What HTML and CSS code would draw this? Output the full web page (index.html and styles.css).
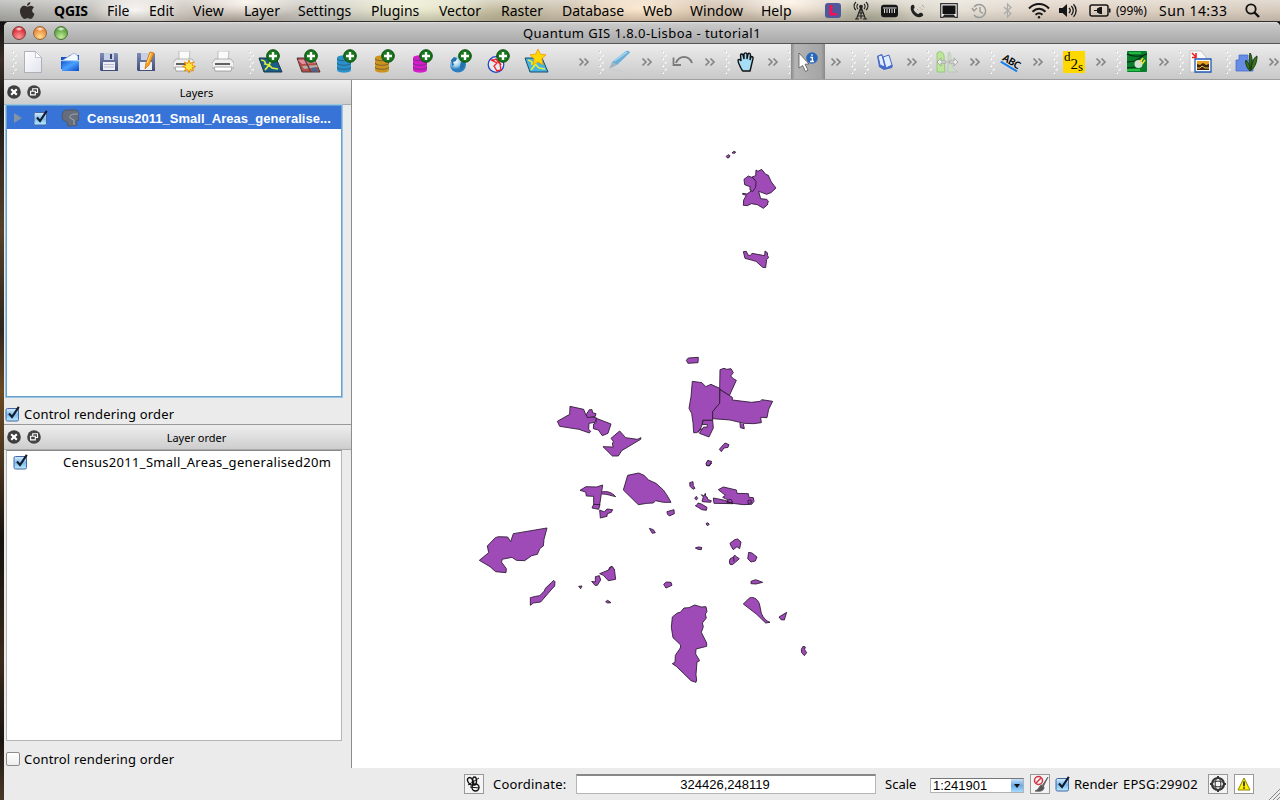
FILE: index.html
```html
<!DOCTYPE html>
<html lang="en">
<head>
<meta charset="utf-8">
<title>Quantum GIS 1.8.0-Lisboa - tutorial1</title>
<link rel="stylesheet" href="styles.css">
</head>
<body>
<svg class="defs" width="0" height="0" aria-hidden="true">
  <defs>
    <linearGradient id="blue" x1="0" y1="0" x2="0" y2="1"><stop offset="0" stop-color="#d8eefc"/><stop offset=".5" stop-color="#7db9ee"/><stop offset="1" stop-color="#b9ecff"/></linearGradient>
    <linearGradient id="folder" x1="0" y1="0" x2="1" y2="1"><stop offset="0" stop-color="#0b4fc4"/><stop offset=".5" stop-color="#4ba0ff"/><stop offset="1" stop-color="#0a48c8"/></linearGradient>
    <linearGradient id="paper" x1="0" y1="0" x2="1" y2="1"><stop offset="0" stop-color="#fff"/><stop offset="1" stop-color="#e2e4ee"/></linearGradient>
    <linearGradient id="disk" x1="0" y1="0" x2="0" y2="1"><stop offset="0" stop-color="#7d8db8"/><stop offset="1" stop-color="#3f4d78"/></linearGradient>
    <radialGradient id="globe" cx=".35" cy=".3"><stop offset="0" stop-color="#fff"/><stop offset=".6" stop-color="#9fd0ee"/><stop offset="1" stop-color="#2b7fc0"/></radialGradient>
  </defs>
  <symbol id="grip" viewBox="0 0 6 24"><g fill="#fff"><circle cx="2" cy="2" r="1.2"/><circle cx="4.500" cy="5.500" r="1.2"/><circle cx="2" cy="9" r="1.2"/><circle cx="4.500" cy="12.500" r="1.2"/><circle cx="2" cy="16" r="1.2"/><circle cx="4.500" cy="19.500" r="1.2"/><circle cx="2" cy="23" r="1"/></g><g fill="#bcbcbc"><circle cx="1.500" cy="1.500" r=".7"/><circle cx="4" cy="5" r=".7"/><circle cx="1.500" cy="8.500" r=".7"/><circle cx="4" cy="12" r=".7"/><circle cx="1.500" cy="15.500" r=".7"/><circle cx="4" cy="19" r=".7"/><circle cx="1.500" cy="22.500" r=".7"/></g></symbol>
  <symbol id="more" viewBox="0 0 12 10"><path d="M1.500 1.500 5 5 1.500 8.500M6.500 1.500 10 5 6.500 8.500" fill="none" stroke="#858585" stroke-width="1.700"/></symbol>
  <symbol id="plus" viewBox="0 0 14 14"><circle cx="7" cy="7" r="6.300" fill="#16761b" stroke="#0c4c10"/><path d="M7 3v8M3 7h8" stroke="#fff" stroke-width="2.400"/></symbol>
  <symbol id="db" viewBox="0 0 14 18"><path d="M0 3v12c0 3.500 14 3.500 14 0V3z"/><ellipse cx="7" cy="3" rx="7" ry="2.700"/><path d="M0 3.500c0 3 14 3 14 0M0 8c0 3 14 3 14 0M0 12c0 3 14 3 14 0" fill="none" stroke="#2b3b4a" stroke-opacity=".6" stroke-width=".9"/></symbol>
  <symbol id="check" viewBox="0 0 16 16"><rect x="1" y="2.500" width="12.500" height="12.500" rx="1.500" fill="url(#blue)" stroke="#4567a4"/><path d="M4 7.500 7 11 13.800.8" fill="none" stroke="#111c2b" stroke-width="2.100"/></symbol>
  <symbol id="close" viewBox="0 0 14 14"><circle cx="7" cy="7" r="6.800" fill="#3e3e3e"/><path d="m4.200 4.200 5.600 5.600m0-5.600L4.200 9.800" stroke="#fff" stroke-width="2.200"/></symbol>
  <symbol id="float" viewBox="0 0 14 14"><circle cx="7" cy="7" r="6.800" fill="#444"/><path d="M5.700 6V3.700h4.800v3.800H8.700M3.600 6.200h4.700v3.700H3.600z" fill="none" stroke="#fff" stroke-width="1.100"/></symbol>
  <symbol id="printer" viewBox="0 0 22 21"><path d="m6 0h11l-1 9H6z" fill="#fafafa" stroke="#aaa" stroke-width=".7"/><path d="M3 8h16l3 4v5H0v-5z" fill="#efefef" stroke="#999" stroke-width=".7"/><path d="M3 13h15" stroke="#333" stroke-width="1.600"/><path d="M2 16h18l-1 4H3z" fill="#fff" stroke="#888" stroke-width=".7"/></symbol>
  <symbol id="star" viewBox="0 0 20 20"><path d="m10 0 3 6.500 7 .8-5.200 5 1.500 7.700L10 16l-6.300 4 1.500-7.700L0 7.300l7-.8z" fill="#ffd800" stroke="#f19b00"/></symbol>
</svg>

<header class="menubar">
  <nav class="menus">
    <span><svg class="apple" viewBox="0 0 16 18"><path d="M11 0c.2 2-1.500 4-3.500 4C7.300 2 9 .3 11 0zM8 5c1-.1 2-1 3.600-1 1.300 0 2.600.8 3.300 1.900-2.800 1.700-2.400 5.500.6 6.600C14.600 15 13.200 18 11.300 18c-1.300 0-1.700-.7-3.200-.7S6.200 18 5 18C3 18 0 13.600 0 9.800 0 6 2.300 4 4.600 4 6 4 7.200 5 8 5z" fill="#332e2b"/></svg></span>
    <b>QGIS</b><span>File</span><span>Edit</span><span>View</span><span>Layer</span><span>Settings</span><span>Plugins</span><span>Vector</span><span>Raster</span><span>Database</span><span>Web</span><span>Window</span><span>Help</span>
  </nav>
  <div class="extras">
    <i><svg width="16" height="15"><rect width="16" height="15" rx="3" fill="#4f589b"/><path d="M4.500 2h3v8H12v2.500H4.500z" fill="#f50f54"/></svg></i>
    <i><svg width="16" height="18" fill="none" stroke="#222" stroke-width="1.100"><path d="M7.900 5 3.500 17M8.100 5l4.400 12M5 11h6M4 14h8M2 17h4m4 0h4M5 2c-1.500 1.500-1.500 3.500 0 5M3 0C.4 2.500.4 6 3 8M11 2c1.500 1.500 1.500 3.500 0 5M13 0c2.600 2.500 2.600 6 0 8M8 5v12"/><circle cx="8" cy="4.500" r="1.300" fill="#222"/></svg></i>
    <i><svg width="19" height="14"><rect x="1" y=".8" width="17" height="12.500" rx="3" fill="#161616"/><path d="M4.500 5v4M7 5v4M9.500 5v4M12 5v4M14.500 5v4M3 4h13.500" stroke="#ddd" stroke-width="1" fill="none"/></svg></i>
    <i><svg width="15" height="16"><path d="M1 3c2-2.500 4-.5 3.500 2L3.500 6c.8 2.800 2.700 4.500 5 5l1.500-1.300c2.200-.3 4.300 1.800 2.600 3.300C7 17.500-1 9 1 3z" fill="#222"/><path d="M7.500 6.500 9 8M10 4.500l2 2M12 2l3 3" stroke="#888" stroke-dasharray="1 1"/></svg></i>
    <i><svg width="18" height="15"><path d="M.7.700h16.600v13.600h-2.300L13.500 12h-9L3 14.300H.7z" fill="#eee" stroke="#333" stroke-width="1.200"/><path d="M2.500 2.500h13v8.500h-13z" fill="#111"/><path d="M4.500 12h9l1.500 2.500H3z" fill="#222"/></svg></i>
    <i><svg width="17" height="16" fill="none" stroke="#999" stroke-width="1.400"><path d="M3 4a6.500 6.500 0 1 1 0 8M1 5l2 3 3-3M9 4v4.500l3 2"/></svg></i>
    <i><svg width="10" height="15" fill="none" stroke="#aaa" stroke-width="1.200"><path d="m1 4 7 6.500L4.500 14V1L8 4.500 1 11"/></svg></i>
    <i><svg width="22" height="17" fill="none" stroke="#161616" stroke-width="2"><path d="M1 6.500c5.500-6 14.500-6 20 0M4.500 9.700c4-4 9-4 13 0M7.500 12.800c2.200-2 4.800-2 7 0"/><circle cx="11" cy="15.200" r="1.200" fill="#161616" stroke="none"/></svg></i>
    <i><svg width="18" height="15"><path d="M0 5h3.500L8 1v13l-4.500-4H0z" fill="#161616"/><path d="M10 5c1.500 1.500 1.500 3.500 0 5M12.300 3c2.600 2.500 2.600 6.500 0 9M14.500 1.200c3.500 3.500 3.500 9.100 0 12.600" fill="none" stroke="#161616" stroke-width="1.300"/></svg></i>
    <i><svg width="22" height="13"><rect x="1" y="1" width="18" height="11" rx="2" fill="none" stroke="#161616" stroke-width="1.500"/><path d="M20 4.500h1.500v4H20zM5 6h3V4.500L11 3h2v7h-2L8 8.500V7H5z" fill="#161616"/></svg></i>
    <span class="pct">(99%)</span>
    <span class="clock">Sun 14:33</span>
    <i><svg width="15" height="15" fill="none" stroke="#111"><circle cx="6" cy="6" r="4.700" stroke-width="1.800"/><path d="m9.500 9.500 4.500 4.500" stroke-width="2.400"/></svg></i>
  </div>
</header>

<div class="window">
  <div class="titlebar"><div class="lights"><i class="red"></i><i class="amber"></i><i class="green"></i></div><h1>Quantum GIS 1.8.0-Lisboa - tutorial1</h1></div>

  <div class="toolbar">
    <div class="group file">
      <svg class="grip"><use href="#grip"/></svg>
      <span class="btn"><svg width="20" height="24"><path d="M1.500 1.500h11l6 6v15h-17z" fill="url(#paper)" stroke="#a9a9b5" stroke-width=".9"/><path d="M12.500 1.500v6h6z" fill="#fff" stroke="#b7b7c4" stroke-width=".8"/></svg></span>
      <span class="btn"><svg width="22" height="22"><path d="M1 6h7l2-2h9v14H1z" fill="#1654bd"/><path d="m3 9 11-7 4 3v5H3z" fill="#f4f8ff" stroke="#7b9ad0" stroke-width=".7"/><path d="M1 9h18v11H2z" fill="url(#folder)"/><path d="M1 9.700h18" stroke="#bfe0ff"/></svg></span>
      <span class="btn"><svg width="20" height="22"><path d="M1 2h17l1 1v17H2l-1-1z" fill="url(#disk)"/><path d="M5 2h10v7H5z" fill="#c9d0e4"/><path d="M11 3h2v5h-2z" fill="#36446e"/><path d="M4 11h12v8H4z" fill="#eef0f5"/><path d="M5 13.500h10M5 16h10" stroke="#b9bdca"/></svg></span>
      <span class="btn"><svg width="22" height="22"><path d="M1 2h17l1 1v17H2l-1-1z" fill="url(#disk)"/><path d="M5 2h10v7H5z" fill="#c9d0e4"/><path d="M4 11h12v8H4z" fill="#eef0f5"/><path d="m14 1 4 1-5 12-4 4 1-6z" fill="#f6a520" stroke="#d5700d" stroke-width=".8"/><path d="m15 2-4 10" stroke="#ffe394"/></svg></span>
      <span class="btn"><svg width="24" height="24"><use href="#printer" x="0" y="1" width="22" height="21"/><path d="m16 10 1.300 3.500 3.200-1.500-1.500 3.200 3.500 1.300-3.500 1.300 1.500 3.200-3.200-1.500L16 23l-1.300-3.500-3.200 1.500 1.500-3.200-3.500-1.300 3.500-1.300-1.500-3.200 3.200 1.500z" fill="#ffe83b" stroke="#ef8b00"/></svg></span>
      <span class="btn"><svg width="22" height="21"><use href="#printer"/></svg></span>
    </div>
    <div class="group layers">
      <svg class="grip"><use href="#grip"/></svg>
      <span class="btn"><svg width="25" height="25"><path d="M1 9h17l6 14H6z" fill="#1b5f89" stroke="#153646"/><path d="M3 11c3 0 5 2 4 4l4 1 3 3 6 1M7 21l4-5 2-4 4-3" stroke="#dbea3c" stroke-width="1.700" fill="none"/><use href="#plus" x="8" y="0" width="14" height="14"/></svg></span>
      <span class="btn"><svg width="25" height="25"><path d="M1 9h17l6 14H6z" fill="#b64e48" stroke="#553738"/><path d="m2 11 16-1 2 4-14 1z" fill="#e890a0"/><path d="m6 17 15-1 1 2-14 2z" fill="#b8aba5"/><path d="m8 9 7 14" stroke="#5a4148" stroke-width="1.500"/><path d="m15 19 5-.5 2 4h-5z" fill="#3b6b9c"/><use href="#plus" x="8" y="0" width="14" height="14"/></svg></span>
      <span class="btn db1"><svg width="23" height="25"><use href="#db" x="2" y="6" width="14" height="18"/><use href="#plus" x="8" y="0" width="14" height="14"/></svg></span>
      <span class="btn db2"><svg width="23" height="25"><use href="#db" x="2" y="6" width="14" height="18"/><use href="#plus" x="8" y="0" width="14" height="14"/></svg></span>
      <span class="btn db3"><svg width="23" height="25"><use href="#db" x="2" y="6" width="14" height="18"/><use href="#plus" x="8" y="0" width="14" height="14"/></svg></span>
      <span class="btn"><svg width="23" height="25"><circle cx="9" cy="15.500" r="8" fill="url(#globe)"/><path d="m2 11 3-3 3 1-1 3-3 1 1 3-2 1zM12 13l4 1-1 4-3 3-1-4z" fill="#256faa"/><use href="#plus" x="9" y="0" width="14" height="14"/></svg></span>
      <span class="btn"><svg width="23" height="25"><circle cx="9" cy="15.500" r="7.800" fill="#e8eaf2" stroke="#2346c4" stroke-width="1.300"/><path d="m4 11 6 3-3 3 3 5 4-1-1-6-4-5-2 1zM11 11l3 5" fill="none" stroke="#f51b24" stroke-width="1.300"/><use href="#plus" x="9" y="0" width="14" height="14"/></svg></span>
      <span class="btn"><svg width="25" height="25"><path d="M1 9h17l6 14H6z" fill="#45b4e2" stroke="#174d69"/><path d="M4 11c3 1 5 2 4 4l4 1 3 3 6 1M7 21l4-5 2-5" stroke="#e4ed37" stroke-width="1.700" fill="none"/><use href="#star" x="6" y="0" width="16" height="16"/></svg></span>
    </div>
    <svg class="more lone"><use href="#more"/></svg>
    <div class="group single">
      <svg class="grip"><use href="#grip"/></svg>
      <span class="btn"><svg width="24" height="24"><path d="M3 20c5-1 12 1 15 3" stroke="#ccc" stroke-width="1.500" fill="none"/><path d="m4 12 14-11q3-1 4 1.500L9 15z" fill="#6aaed7"/><path d="m6 11 13-9" stroke="#a0d1ed" stroke-width="2"/><path d="m4 12 5 3-6 3-2 1z" fill="#9fb4c4"/></svg></span>
      <svg class="more"><use href="#more"/></svg>
    </div>
    <div class="group single">
      <svg class="grip"><use href="#grip"/></svg>
      <span class="btn"><svg width="22" height="14"><path d="M4 8C7 0 17 0 20 8" fill="none" stroke="#7c7c7c" stroke-width="2"/><path d="M1.500 2.500v7.500h7.500" fill="none" stroke="#7c7c7c" stroke-width="1.800"/></svg></span>
      <svg class="more"><use href="#more"/></svg>
    </div>
    <div class="group single">
      <svg class="grip"><use href="#grip"/></svg>
      <span class="btn"><svg width="18" height="20"><path d="M5 18C3 14 1 12 1 8c1-1 2-1 3 1L3.500 3C4 1.500 5.800 2 6 3L7 7V2c.5-1.500 2.500-1.500 3 0v5l1-5c1-1.300 2.500-.5 2.500 1L13 8l1-3c1-1 2.500 0 2 1.500L14 15l-1 4H6z" fill="#a7def7" stroke="#111" stroke-width="1.400"/></svg></span>
      <svg class="more"><use href="#more"/></svg>
    </div>
    <div class="group single">
      <svg class="grip"><use href="#grip"/></svg>
      <span class="btn active"><svg width="22" height="22"><circle cx="15" cy="7" r="5.800" fill="#2766bd"/><path d="M15 3.300v1.500M13.300 6.400h2v4.200M13 10.500h4" stroke="#fff" stroke-width="1.500"/><path d="m2 2 10 11-4 .2 3 6-2.500 1.300-2.800-6L2 17z" fill="#fff" stroke="#555" stroke-width=".8"/></svg></span>
      <svg class="more"><use href="#more"/></svg>
    </div>
    <div class="spare"><svg class="grip"><use href="#grip"/></svg></div>
    <div class="group single">
      <svg class="grip"><use href="#grip"/></svg>
      <span class="btn"><svg width="18" height="18"><path d="m1 3 5-2 4 12 7-1-1 3-8 2-5-3z" fill="#4667c5"/><path d="m2 3 4-1 3 12-5-2zM7 4l6-2 3 10-6 3z" fill="#e0edff" stroke="#4869c9"/></svg></span>
      <svg class="more"><use href="#more"/></svg>
    </div>
    <div class="group single">
      <svg class="grip"><use href="#grip"/></svg>
      <span class="btn"><svg width="26" height="24"><path d="M2 22V3c5-4 8 1 7 7l1 12z" fill="#bde59b" stroke="#9cc77e"/><path d="M13 22V3c2-3 3 1 3 6 1 8 2 10 7 13z" fill="#c9dfc2" stroke="#bbb" stroke-width=".6"/><path d="m6 8-4 4 4 4v-3h5v-2H6zM19 8l4 4-4 4v-3h-5v-2h5z" fill="#ededed" stroke="#999" stroke-width=".8"/></svg></span>
      <svg class="more"><use href="#more"/></svg>
    </div>
    <div class="group single">
      <svg class="grip"><use href="#grip"/></svg>
      <span class="btn"><span class="abc">ABC</span></span>
      <svg class="more"><use href="#more"/></svg>
    </div>
    <div class="group single">
      <svg class="grip"><use href="#grip"/></svg>
      <span class="btn"><span class="d2s"><span>d</span><span class="two">2</span><span class="ess">s</span></span></span>
      <svg class="more"><use href="#more"/></svg>
    </div>
    <div class="group single">
      <svg class="grip"><use href="#grip"/></svg>
      <span class="btn"><svg width="20" height="21"><rect width="20" height="21" rx="1" fill="#087d2b"/><path d="M0 3c5 3 15 3 20 0M0 11l8-1 8-5M0 17l9-1" fill="none" stroke="#032e11" stroke-width="1.200"/><path d="M2 1h12v2H2z" fill="#20b748"/><circle cx="11.500" cy="13" r="4" fill="#d5dfd3"/><path d="m13 11 3-4M15 13l3-4" stroke="#f5db38" stroke-width="1.600"/><path d="M0 19h13" stroke="#26be45" stroke-width="2"/></svg></span>
      <svg class="more"><use href="#more"/></svg>
    </div>
    <div class="group image">
      <svg class="grip"><use href="#grip"/></svg>
      <span class="btn"><svg width="23" height="24"><path d="M1 1h11l5 6v15H1z" fill="#fafafa" stroke="#bbb" stroke-width=".8"/><path d="m3 3 4 4M7 3v4.500H3" fill="none" stroke="#ee2020" stroke-width="1.600"/><path d="M6 9h16v13H6z" fill="#fff" stroke="#2259b3" stroke-width="1.300"/><path d="M8 11h12v9H8z" fill="#e8a020"/><path d="m8 14 3 1 3-2 3 2 3-1v6H8z" fill="#3a220b"/><path d="M8 18h3l2-2 3 2h4" stroke="#f3c142" fill="none"/></svg></span>
    </div>
    <div class="group single">
      <svg class="grip"><use href="#grip"/></svg>
      <span class="btn"><svg width="24" height="22"><path d="M1 9h3V4h9v5h5v11H1z" fill="#668ce6" stroke="#4670d0" stroke-width=".8"/><path d="M15 20c-4-4-5-9-4-11 2 2 4 5 4 9 0-6-1-13 0-16 3 4 2 12 1 17 0-6 3-13 6-14 0 6-2 12-7 15z" fill="#3d731b" stroke="#173b0b"/></svg></span>
      <svg class="more"><use href="#more"/></svg>
    </div>
  </div>

  <main class="work">
    <aside class="docks">
      <section class="dock first">
        <div class="dock-head"><svg><use href="#close"/></svg><svg><use href="#float"/></svg><h2>Layers</h2></div>
        <div class="list focused">
          <div class="row selected"><svg class="arrow" viewBox="0 0 8 10"><path d="m0 0 8 5-8 5z" fill="#8393a6"/></svg><svg class="check"><use href="#check"/></svg><svg class="poly" viewBox="0 0 19 18"><path d="M2 3q2-3 6-2h8l2 3-1 4 1 3-3 1 1 4-5 1H7l-1-4-4-2-1-4z" fill="#666e7c" stroke="#4f596b"/><path d="M9 9c-1-4 4-4 8-4M9 9l4 2v5" fill="none" stroke="#a0a8b4"/></svg><strong>Census2011_Small_Areas_generalise...</strong></div>
        </div>
        <label class="control"><svg class="check"><use href="#check"/></svg><span>Control rendering order</span></label>
      </section>
      <section class="dock second">
        <div class="dock-head"><svg><use href="#close"/></svg><svg><use href="#float"/></svg><h2>Layer order</h2></div>
        <div class="list">
          <div class="row"><svg class="check"><use href="#check"/></svg><span class="lname">Census2011_Small_Areas_generalised20m</span></div>
        </div>
        <label class="control"><i class="box"></i><span>Control rendering order</span></label>
      </section>
    </aside>
    <svg class="map" viewBox="352 80 928 688" fill="#9f4bb7" stroke="#2c1733" stroke-width="2.600" stroke-linejoin="round">
      <g transform="translate(670 140) scale(.33333)">
        <path d="m169 49 5-5 6 3-3 6-5 1zM186 39l5-5 6 2-3 4z"/>
        <path d="m258 90 6 4 11-6 12 15 8 3 9 20 14 18-15 14-13 5-24-9 6 22 18 2 5 5-3 12-12 10-18-11-18-3-12 6-12-1 1-16 8-14-11-3v-3l13 2 15-11 10-14-2-18-8-8 11-4z"/>
        <path d="m222 118 13-10 15 6 8 11-1 17-9 13-8-5v-10l-16-6z"/>
        <path d="m220 335 9-1 5 11 7 2 5-7 38 7 1-14 7 5 1 9 3 6-6 5-3 25-9-1-20-18-33-9z"/>
      </g>
      <g transform="translate(540 350) scale(.33333)">
        <path d="m439 31 6-7 30-2-1 16-30 2z"/>
        <path d="m540 59 12-4 8 3 13-2 7 12-8 10 8 8 9 5-21 46-29-20z"/>
        <path d="M457 94 486 98 497 110 513 103 539 115 539 160 518 185V211H488L486 225 480 240 470 248H461L459 218 455 190 447 175 453 140Z"/>
        <path d="M540 119 577 142V150L634 157 661 154 665 149 698 154 686 178 681 203 662 202 664 218 640 221 612 220 570 210 518 206V185L539 160Z"/>
        <path d="M518 211h-29l-2 13 15-1-1 9-10-1-13 19 29 11 13-27zM474 248l5-10 8-1M600 219l1 14 12 3-3-15"/>
        <path d="m550 284 5-5 12 5-3 8-12 2-8 11-6-7zM499 343l5-12 11 8-7 9-8-1z"/>
        <path d="m90 169 41 9 7 18 32 8-5 13-18 3-1 18 6 6-4 5-31-11-58-9-7-15 37-21z"/>
        <path d="m139 193 9-14h8l2 9 10 3-2 8-24 4zM169 205l44 17-9 28-17 7-12-17-15-4 1-14 7-4z"/>
        <path d="M239 243 257 263 292 268 303 263 302 268 245 302 235 318H217L189 290 220 291 217 282 220 274 213 265Z"/>
      </g>
      <g transform="translate(570 460) scale(.33333)">
        <path d="m30 91 18-11 32 1 18-6-9 60-18-1V109l-22-1-2-12z"/>
        <path d="M95 96c15-4 31 1 42 14-15-3-24-8-42-8M71 133l19 1-4 14-20-4zM89 150l14 6 8-9 17 2-4 8-12 4-1 8-20 5z"/>
        <path d="M160 90 173 46 206 39 222 46 236 60 258 70 280 90 290 104 303 127 280 127 257 122 250 129 231 130 205 134Z"/>
        <path d="m291 155 21-6 1 12-15 7-6-6zM238 205l12 4 6 9-9 2zM408 10l5-8 12 2-6 12-8 1zM359 68l10-3 1 12 5 8-6 3-9-9zM374 115l5-6 4 6-4 5zM396 123l4-12-6-7 8 4 4-8 1 9 4 2 3 8 10 3-2 5-25-2zM376 137l6-3 2-5 10 3 17 10-2 9-14-2-9-6z"/>
        <path d="M445 89 460 81 499 90 501 100 535 101 537 112 550 113 552 124 545 133 520 134 488 130 470 118 458 112 466 106Z"/>
        <path d="m430 114 16 3 18 4 25 10-57-1zM471 128v-7l12-3 5 9zM534 130v-9l9-1 1 9zM408 191l5-3 5 5-6 4zM376 264l8-3 11 1-1 7-10-1z"/>
        <path d="m480 250 14-11 9-2 10 9-4 20-8-6-11 9-6-9zM478 306l2-9 11-7 3-5 5 5 9 6-12 11-9 7-7-1zM491 291l1 14M536 277l10 2 15 12-5 12-13 3-10-10zM116 329l3-7 7-3 6 9z"/>
      </g>
      <g transform="translate(470 510) scale(.33333)">
        <path d="m28 151 28-23-4-20 24-25 9-3 28 1 9 14 8-24 101-17-9 34-2 20-10 7-8 18-17 4-21 15-25-1-13-9-30 6-1 9 14 19-1 12-31-3-17-15z"/>
        <path d="M181 286 181 263 197 259 209 257 223 243 226 235 245 217 251 211 255 215 254 228 243 240 212 276 190 279ZM326 229l10-1-4 8zM365 214 376 216 376 200 388 197 392 210 382 226 375 226ZM389 191 416 180 425 169 433 177 437 208 415 212 400 196ZM407 275l6-4 10 7-10 1z"/>
      </g>
      <g transform="translate(650 560) scale(.33333)">
        <path d="m41 73 8-7 14 1 3 9-18 8zM303 71v-7l14-5 21 8-20 5z"/>
        <path d="M280 132 296 116C305 107 325 115 329 135L334 160C340 175 350 184 360 187L347 189 320 163ZM387 171l23-14-7 23-10-1zM454 268l5-9 7 2-2 8 6 9-7 9-8-9z"/>
        <path d="M67 171 82 159 91 157 102 144 117 143 134 135 154 141 168 140 171 155 166 162 169 174 157 189 160 200 154 217 170 249V259L138 267 137 282 149 302 141 306 138 344 140 360 138 367 123 362 80 320 67 311 75 307 76 286 91 264 92 255 69 233 64 202Z"/>
      </g>
    </svg>
  </main>

  <footer class="status">
    <span class="tool"><svg width="18" height="18" fill="none" stroke="#111" stroke-width="1.400"><ellipse cx="5.500" cy="6" rx="2.500" ry="4" transform="rotate(-30 6 6)"/><ellipse cx="9.500" cy="6" rx="2" ry="4"/><circle cx="10.500" cy="12.500" r="3.500"/><path d="m3 10 11-7M5 12l9 1" stroke-width="1"/></svg></span>
    <span class="coord-label">Coordinate:</span>
    <span class="coord">324426,248119</span>
    <span class="scale-label">Scale</span>
    <span class="combo"><span>1:241901</span><i><svg width="6" height="4"><path d="M0 0h6L3 4z" fill="#111"/></svg></i></span>
    <span class="tool stop"><svg width="17" height="18"><path d="m16 2-6 9 1 1zM10 10c-3 0-2 4-7 6 7 1 9-1 9-4z" fill="#555" stroke="#666"/><circle cx="6.500" cy="5.500" r="4" fill="none" stroke="#d33343" stroke-width="1.500"/><path d="m9 3-5 5" stroke="#d33343" stroke-width="1.500"/></svg></span>
    <svg class="check"><use href="#check"/></svg>
    <span class="render">Render</span>
    <span class="epsg">EPSG:29902</span>
    <span class="tool crs"><svg width="16" height="16" fill="none" stroke="#333"><circle cx="8" cy="8" r="6" stroke-width="2.200"/><ellipse cx="8" cy="8" rx="2.800" ry="6"/><ellipse cx="8" cy="8" rx="6" ry="2.800"/><path d="M8 0v3M8 13v3M0 8h3M13 8h3" stroke-width="2"/></svg></span>
    <span class="tool warn"><svg width="14" height="14"><path d="m7 1 6 12H1z" fill="#fff200" stroke="#8d8500"/><path d="M7 4.500v4.700M7 10.300v1.500" stroke="#111" stroke-width="1.500"/></svg></span>
    <svg class="resize" width="12" height="12"><path d="M1 12 12 1M5 12l7-7M9 12l3-3" stroke="#888"/></svg>
  </footer>
</div>
</body>
</html>
```
FILE: styles.css
```css
* { box-sizing: border-box; }
body { margin: 0; width: 1280px; height: 800px; overflow: hidden; display: flex; flex-direction: column; font: 13px "Noto Sans", sans-serif; color: #000;
  background: linear-gradient(#111 22px, #3b2e25 60px, #161514 110px, #3a2e24 165px, #574127 230px, #30271f 330px, #6b4a23 390px, #46321f 470px, #16120e 540px, #3a2b1c 660px, #1b1511 740px, #4a3928 800px); }
.defs { position: absolute; }
svg { display: block; flex: none; overflow: visible; }
i { font-style: normal; display: block; }

.menubar { height: 22px; flex: none; display: flex; justify-content: space-between; border-bottom: 1px solid #332f2c; line-height: 21px; font-size: 14px;
  background:
    linear-gradient(rgba(255,255,255,.4), rgba(255,255,255,.1) 50%, rgba(80,80,80,.16)),
    radial-gradient(ellipse 45px 20px at 135px 10px, #f6f4f0, transparent),
    radial-gradient(ellipse 60px 18px at 245px 2px, #f8f1e8, transparent),
    radial-gradient(ellipse 80px 20px at 410px 5px, #eeeccc, transparent),
    radial-gradient(ellipse 50px 20px at 505px 14px, #b7ac8b, transparent),
    radial-gradient(ellipse 70px 20px at 640px 8px, #fae4c8, transparent),
    radial-gradient(ellipse 60px 20px at 790px 2px, #fff1e2, transparent),
    radial-gradient(ellipse 50px 20px at 870px 18px, #aaa792, transparent),
    linear-gradient(90deg, #a7a7a3, #b7b5b0 80px, #d2ccc4 160px, #b5aa9e 235px, #c6c6c0 320px, #d0cfb3 430px, #c2b9a4 540px, #d5b99c 640px, #c9b9a6 740px, #c7c0af 850px, #e2dcd0 960px, #dcccbd 1060px, #d9cbbb 1160px, #d0c3b4); }
.menus { display: grid; grid-template-columns: 34px 53px 42px 44px 51px 54px 73px 68px 62px 61px 81px 47px 71px 30px; padding-left: 20px; }
.menus > :nth-child(n+2) { white-space: nowrap; }
.menus b { font-weight: 700; letter-spacing: -.1px; }
.apple { width: 15px; height: 17px; margin-top: 2px; }
.extras { display: grid; grid-template-columns: 27px 30px 26px 30px 34px 26px 32px 30px 28px 36px 41px 77px 32px; padding-right: 12px; }
.extras > i { display: flex; align-items: center; justify-content: center; height: 21px; }
.pct { font-size: 12px; margin-left: -2px; }
.clock { letter-spacing: .45px; white-space: nowrap; }

.window { width: 1276px; height: 778px; margin-left: 4px; display: flex; flex-direction: column; background: #ebebeb; border-radius: 5px 5px 0 0; overflow: hidden; }
.titlebar { height: 22px; flex: none; position: relative; background: linear-gradient(#e0e0e0, #c9c9c9 2px, #a8a8a8); border-bottom: 1px solid #565656; }
.lights { position: absolute; left: 8px; top: 4px; display: flex; gap: 7px; }
.lights i { width: 14px; height: 14px; border-radius: 50%; border: 1px solid #77433e; }
.red { background: radial-gradient(ellipse 4px 2px at 6px 2px, #fff, transparent), radial-gradient(circle at 6px 10px, #ff9a9c, #dd333b 65%); }
.lights .amber { border-color: #94663e; background: radial-gradient(ellipse 4px 2px at 6px 2px, #fff, transparent), radial-gradient(circle at 6px 10px, #ffdf90, #e98c3c 65%); }
.lights .green { border-color: #50713f; background: radial-gradient(ellipse 4px 2px at 6px 2px, #fff, transparent), radial-gradient(circle at 6px 10px, #c5ed9c, #61a744 65%); }
h1, h2 { margin: 0; font-weight: 400; }
h1 { font-size: 13px; line-height: 22px; text-align: center; letter-spacing: .44px; }

.toolbar { height: 36px; flex: none; display: flex; align-items: center; background: linear-gradient(#ececec, #c9c9c9); border-bottom: 1px solid #a0a0a0; padding-left: 7px; overflow: hidden; }
.group { display: flex; align-items: center; height: 35px; flex: none; }
.grip { width: 6px; height: 24px; margin-right: -3px; }
.file { width: 237px; }
.layers { width: 308px; }
.single { width: 63px; }
.image { width: 47px; }
.spare { width: 13px; flex: none; }
.btn { width: 38px; height: 35px; display: flex; align-items: center; justify-content: center; flex: none; }
.active { background: linear-gradient(90deg, #888, #b4b4b4 4px, #a5a5a5 30px, #888); width: 34px; margin: 0 3px 0 1px; }
.more { width: 12px; height: 10px; margin-left: 2px; }
.lone { margin: 0 8px 0 22px; }
.db1 { fill: #2b91cb; } .db2 { fill: #ce931f; } .db3 { fill: #d51cca; }
.abc { font: 600 10px/10px "Noto Sans", sans-serif; border-bottom: 2px solid #1680f0; transform: rotate(31deg); letter-spacing: -.4px; }
.d2s { width: 22px; height: 22px; background: #ffd800; display: flex; font: 13px/12px "Liberation Serif", serif; padding-left: 1px; }
.d2s .two { padding-top: 7px; font-size: 15px; } .d2s .ess { padding-top: 10px; }

.work { display: flex; height: 688px; flex: none; background: #fff; }
.docks { width: 348px; flex: none; background: #ebebeb; border-right: 1px solid #8c8c8c; }
.dock.first { height: 344px; }
.dock-head { display: flex; align-items: center; gap: 6px; height: 25px; padding-left: 3px; background: linear-gradient(#eee, #cdcdcd); border-bottom: 1px solid #aaa; }
.dock-head svg { width: 14px; height: 14px; }
.dock-head h2 { flex: 1; text-align: center; font-size: 11px; padding-right: 5px; }
.list { width: 336px; height: 291px; margin-left: 2px; background: #fff; border: 1px solid #b5b5b5; border-top-color: #888; }
.list.focused { height: 292px; border: 1px solid #66a1ce; box-shadow: 0 0 0 1px #9bc5e5; }
.row { display: flex; align-items: center; height: 22px; padding-left: 6px; white-space: nowrap; }
.row.selected { background: #3874d8; color: #fff; height: 23px; padding-left: 7px; }
.check { width: 16px; height: 16px; }
.arrow { width: 8px; height: 10px; margin-right: 11px; }
.poly { width: 19px; height: 18px; margin: 0 7px 0 12px; }
.row strong { font: 700 13px "Liberation Sans", sans-serif; letter-spacing: .03px; padding-top: 1px; }
.lname { padding-left: 34px; letter-spacing: .3px; }
.control { display: flex; align-items: center; gap: 3px; height: 27px; padding: 7px 0 0 1px; letter-spacing: .18px; }
.second { border-top: 1px solid #999; }
.second .control { padding-top: 0; height: 35px; }
.box { width: 14px; height: 14px; margin: 0 1px; border: 1px solid #8c8c8c; border-radius: 2px; background: linear-gradient(#fff, #eee); }
.map { width: 928px; height: 688px; }

.status { display: flex; align-items: center; height: 32px; flex: none; padding-left: 460px; white-space: nowrap; }
.tool { width: 20px; height: 20px; flex: none; border: 1px solid #999; background: #f4f4f4; display: flex; align-items: center; justify-content: center; }
.coord-label { width: 82px; padding-left: 9px; margin-right: 10px; flex: none; letter-spacing: .2px; }
.coord { width: 300px; height: 20px; flex: none; border: 1px solid #b5b5b5; border-top: 2px solid #888; background: #fff; text-align: center; font: 13px/18px "Liberation Sans", sans-serif; padding-right: 2px; }
.scale-label { width: 54px; padding-left: 9px; flex: none; }
.combo { width: 94px; height: 15px; flex: none; margin-top: 3px; display: flex; justify-content: space-between; border: 1px solid #b3b3b3; border-top-color: #777; background: #fff; font: 13px/14px "Liberation Sans", sans-serif; padding-left: 2px; }
.combo i { width: 12px; background: linear-gradient(#c9e2f8, #6caae5 50%, #a5dcff); display: flex; align-items: center; justify-content: center; }
.stop { margin: 0 5px 0 6px; }
.render { width: 52px; padding-left: 3px; flex: none; }
.epsg { width: 85px; flex: none; letter-spacing: .25px; }
.warn { margin-left: 6px; background: #fff; }
.resize { align-self: flex-end; margin-left: auto; }
```
